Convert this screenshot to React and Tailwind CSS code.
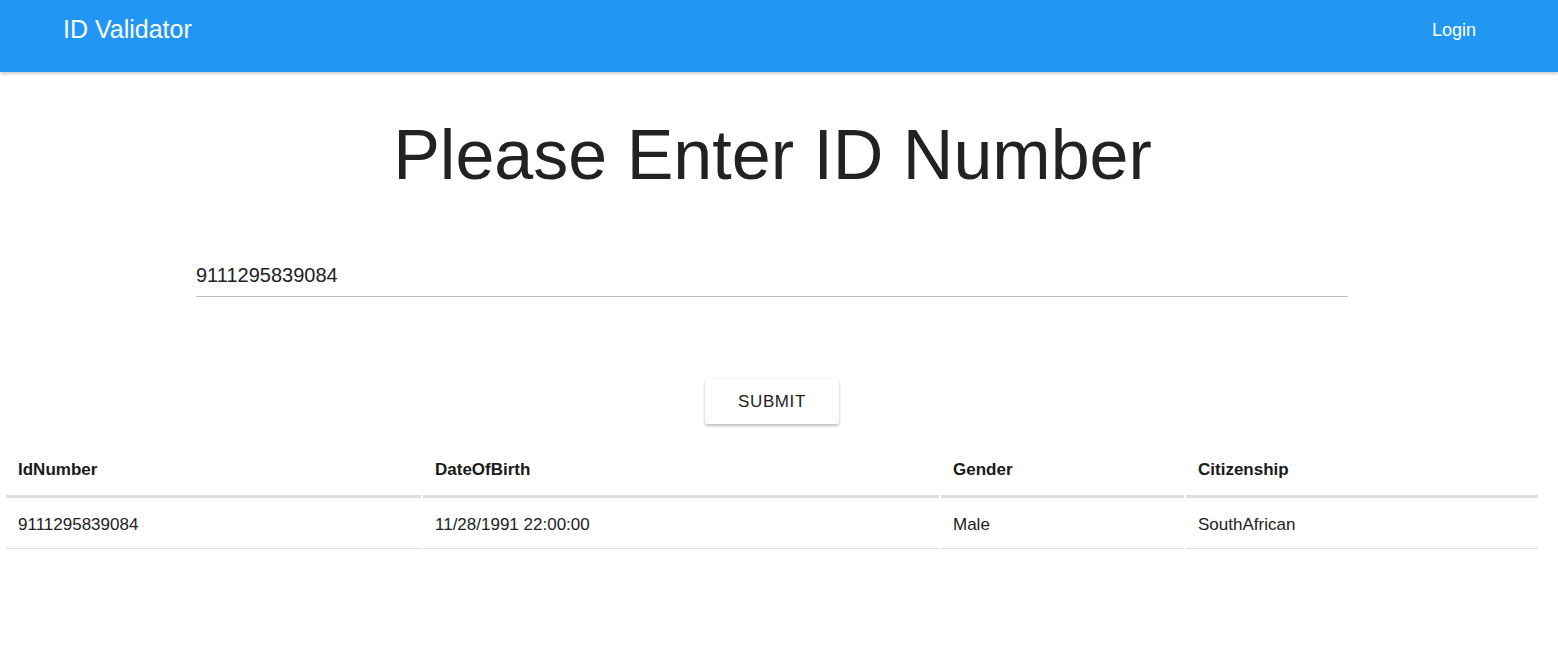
export default function App() {
  const rows = [
    {
      idNumber: "9111295839084",
      dateOfBirth: "11/28/1991 22:00:00",
      gender: "Male",
      citizenship: "SouthAfrican",
    },
  ];

  return (
    <div className="min-h-screen bg-white text-[#212529] font-['Liberation_Sans',Arial,sans-serif]">
      {/* Navbar */}
      <div className="h-[72px] bg-[#2196f3] shadow-[0_2px_3px_rgba(0,0,0,0.2)] flex items-start justify-between pl-[63px] pr-[82px] pt-[17px] text-white">
        <span className="text-[25px] leading-[25px]">ID Validator</span>
        <span className="text-[18px] leading-[26px]">Login</span>
      </div>

      {/* Title */}
      <h1 className="text-center text-[70px] leading-none text-[#222] mt-[48px] pr-[13px]">
        Please Enter ID Number
      </h1>

      {/* Input */}
      <div className="mt-[74px] flex justify-center">
        <div className="w-[1152px] ml-[-14px] border-b border-[#bdbdbd] pb-[7px]">
          <input
            defaultValue="9111295839084"
            className="w-full outline-none text-[20px] leading-[22px] text-[#212121] bg-transparent"
          />
        </div>
      </div>

      {/* Submit */}
      <div className="mt-[82px] flex justify-center">
        <button className="w-[134px] h-[45px] mr-[14px] bg-white rounded-[3px] shadow-[0_2px_3px_rgba(0,0,0,0.25),0_0_2px_rgba(0,0,0,0.08)] text-[17px] tracking-[0.6px] text-[#212121] uppercase">
          Submit
        </button>
      </div>

      {/* Table */}
      <div className="mt-[13px] px-[4px]">
        <table className="w-[1536px] border-separate border-spacing-[2px] text-[17px]">
          <thead>
            <tr>
              <th className="w-[415px] text-left font-bold text-[#1a1a1a] px-[12px] pt-[18px] pb-[12px] border-b-[3px] border-[#dddddd]">
                IdNumber
              </th>
              <th className="w-[516px] text-left font-bold text-[#1a1a1a] px-[12px] pt-[18px] pb-[12px] border-b-[3px] border-[#dddddd]">
                DateOfBirth
              </th>
              <th className="w-[243px] text-left font-bold text-[#1a1a1a] px-[12px] pt-[18px] pb-[12px] border-b-[3px] border-[#dddddd]">
                Gender
              </th>
              <th className="text-left font-bold text-[#1a1a1a] px-[12px] pt-[18px] pb-[12px] border-b-[3px] border-[#dddddd]">
                Citizenship
              </th>
            </tr>
          </thead>
          <tbody>
            {rows.map((row) => (
              <tr key={row.idNumber}>
                <td className="px-[12px] pt-[12px] pb-[11px] border-b border-[#dddddd] text-[#212121]">
                  {row.idNumber}
                </td>
                <td className="px-[12px] pt-[12px] pb-[11px] border-b border-[#dddddd] text-[#212121]">
                  {row.dateOfBirth}
                </td>
                <td className="px-[12px] pt-[12px] pb-[11px] border-b border-[#dddddd] text-[#212121]">
                  {row.gender}
                </td>
                <td className="px-[12px] pt-[12px] pb-[11px] border-b border-[#dddddd] text-[#212121]">
                  {row.citizenship}
                </td>
              </tr>
            ))}
          </tbody>
        </table>
      </div>
    </div>
  );
}
